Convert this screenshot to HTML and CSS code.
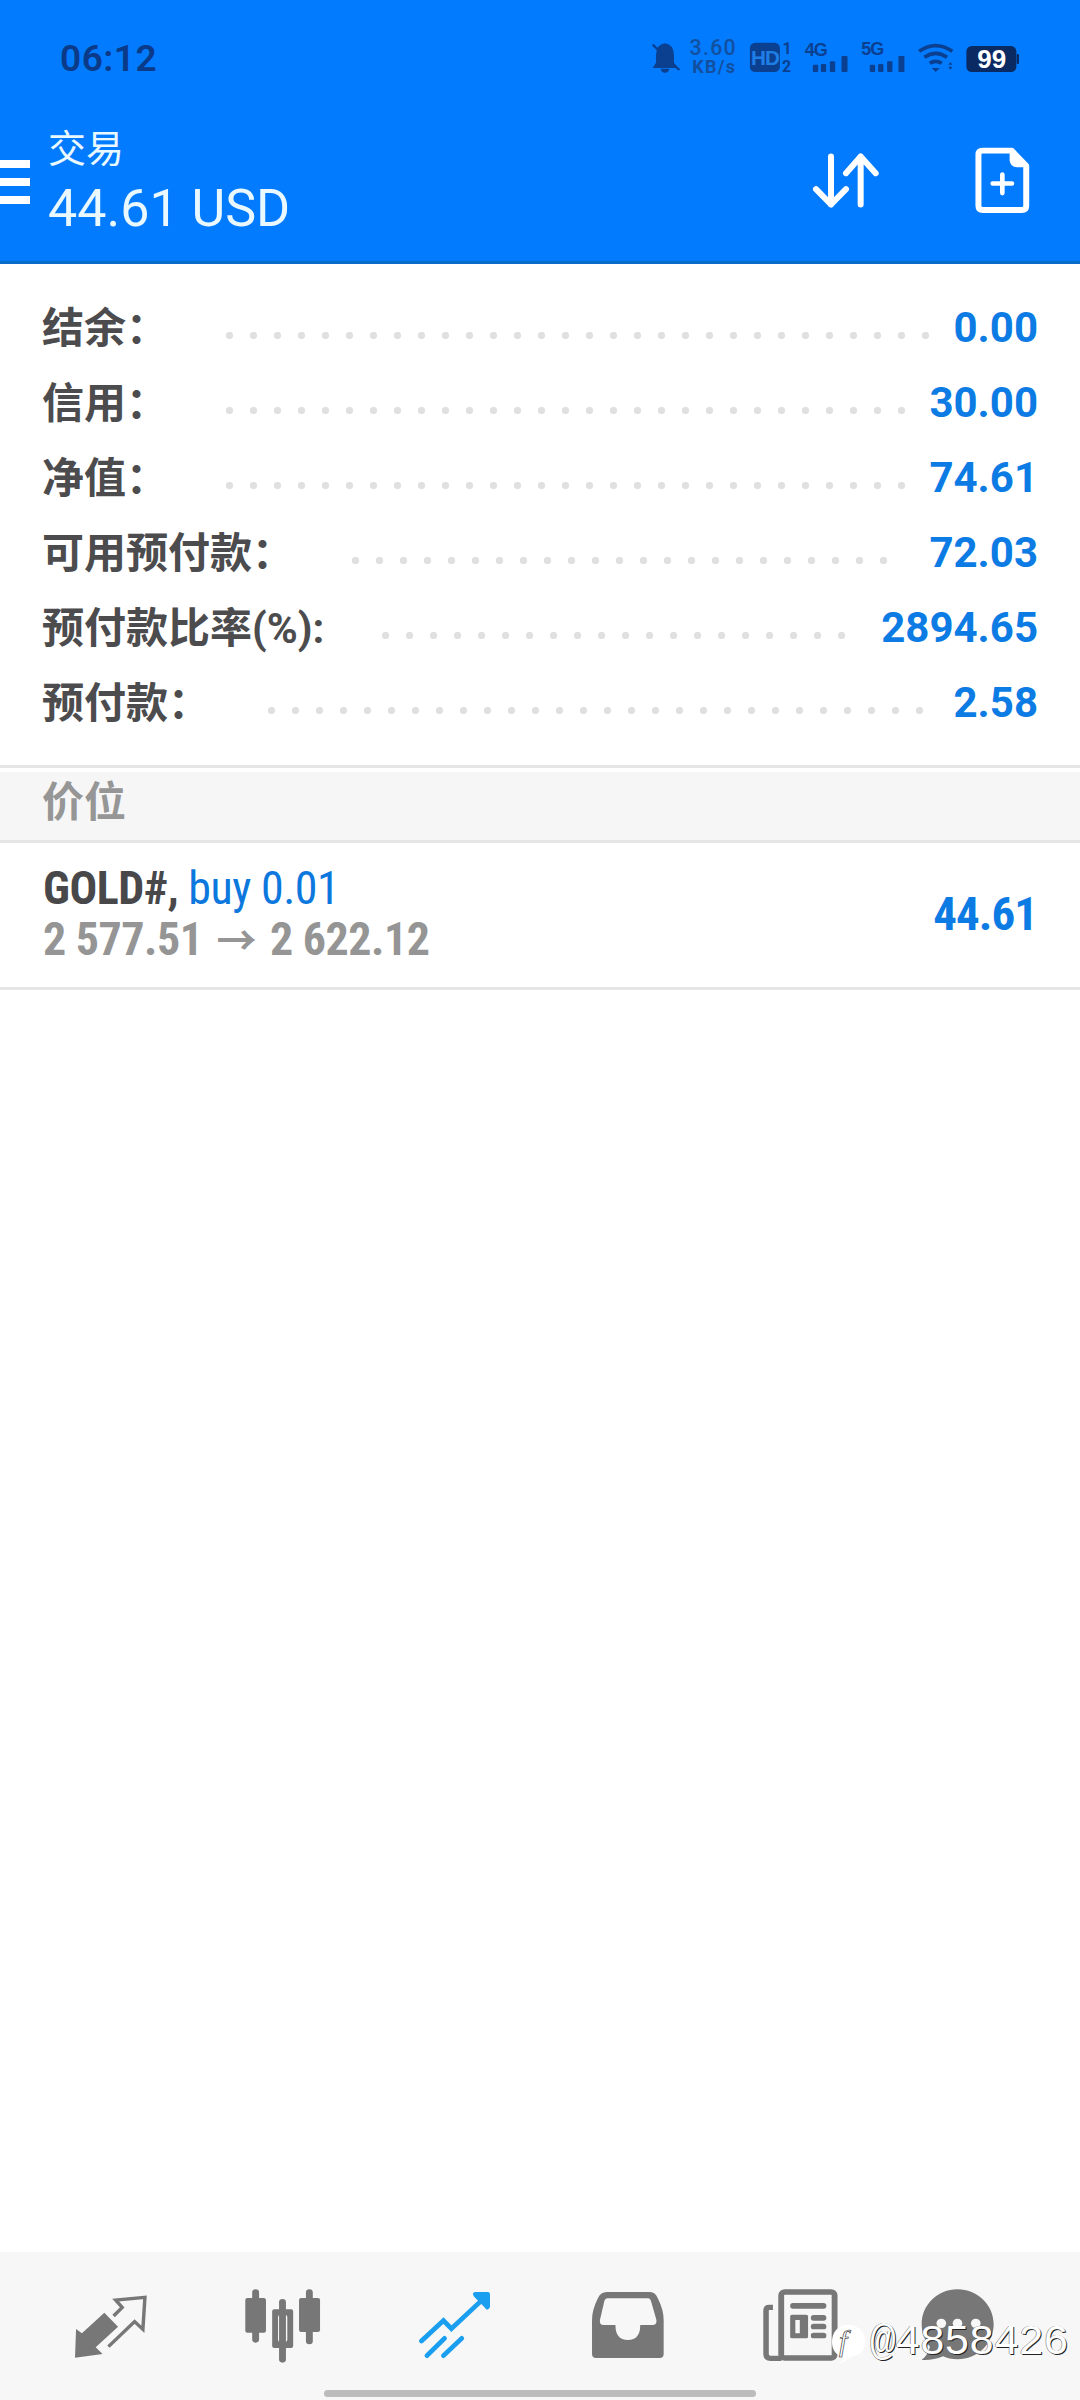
FILE: index.html
```html
<!DOCTYPE html>
<html>
<head>
  <meta charset="utf-8">
  <title>交易</title>
  <link rel="stylesheet" href="styles.css">
</head>
<body>
  <div class="page">
    <div class="header">
      <div class="status-bar">
        <span class="clock">06:12</span>
        <svg class="status-icons" viewBox="150 35 1120 160">
          <!-- bell off -->
          <path class="ic-dark" d="M195 72 Q222 76 222 108 V130 L234 146 H158 L168 130 V108 Q168 76 195 72 Z M182 148 H208 Q206 160 195 160 Q184 160 182 148 Z"/>
          <path class="ic-slash" d="M158 76 L238 152"/>
          <text class="st-speed" x="340" y="108" text-anchor="middle">3.60</text>
          <text class="st-unit" x="343" y="162" text-anchor="middle">KB/s</text>
          <!-- hd -->
          <rect class="ic-dark" x="450" y="70" width="90" height="88" rx="16"/>
          <text class="st-hd" x="495" y="136" text-anchor="middle">HD</text>
          <text class="st-small" x="562" y="104" text-anchor="middle">1</text>
          <text class="st-small" x="560" y="157" text-anchor="middle">2</text>
          <!-- sim 1 -->
          <text class="st-net" x="648" y="110" text-anchor="middle">4G</text>
          <rect class="ic-dark" x="639" y="136" width="16" height="22" rx="3"/>
          <rect class="ic-dark" x="663" y="134" width="16" height="24" rx="3"/>
          <rect class="ic-dark" x="690" y="126" width="16" height="32" rx="3"/>
          <rect class="ic-dark" x="725" y="110" width="18" height="48" rx="3"/>
          <!-- sim 2 -->
          <text class="st-net" x="817" y="108" text-anchor="middle">5G</text>
          <rect class="ic-dark" x="810" y="136" width="16" height="22" rx="3"/>
          <rect class="ic-dark" x="835" y="134" width="16" height="24" rx="3"/>
          <rect class="ic-dark" x="862" y="126" width="16" height="32" rx="3"/>
          <rect class="ic-dark" x="896" y="110" width="18" height="48" rx="3"/>
          <!-- wifi -->
          <path class="ic-wifi" d="M958 96 Q1008 62 1058 96"/>
          <path class="ic-wifi" d="M974 114 Q1008 90 1042 114"/>
          <path class="ic-wifi" d="M990 132 Q1008 120 1026 132"/>
          <path class="ic-dark" d="M996 146 H1020 L1008 158 Z M1046 136 L1052 128 L1058 136 Z M1046 142 H1058 L1052 152 Z"/>
          <!-- battery -->
          <rect class="ic-batt" x="1100" y="80" width="150" height="78" rx="16"/>
          <rect class="ic-batt" x="1251" y="104" width="7" height="30" rx="3"/>
          <text class="st-batt" x="1176" y="147" text-anchor="middle">99</text>
        </svg>
      </div>
      <div class="toolbar">
        <div class="menu-btn"><span></span><span></span><span></span></div>
        <div class="toolbar-title">
          <div class="title-sub">交易</div>
          <div class="title-main">44.61 USD</div>
        </div>
        <svg class="act-swap" viewBox="630 395 210 170">
          <path class="ic-white" d="M693 408 V552 M648 506 L693 552 L738 506"/>
          <path class="ic-white" d="M782 552 V408 M738 458 L782 408 L827 458"/>
        </svg>
        <svg class="act-new" viewBox="1115 370 183 220">
          <path class="ic-doc" d="M1146 390 H1234 L1278 436 V556 Q1278 569 1265 569 H1147 Q1134 569 1134 556 V402 Q1134 390 1146 390 Z"/>
          <path class="ic-fill" d="M1228 384 L1284 440 H1250 Q1230 440 1228 420 Z"/>
          <path class="ic-plus" d="M1206 462 V518 M1177 489 H1235"/>
        </svg>
      </div>
    </div>

    <div class="summary">
      <div class="row"><span class="row-label">结余：</span><span class="row-dots"></span><span class="row-value">0.00</span></div>
      <div class="row"><span class="row-label">信用：</span><span class="row-dots"></span><span class="row-value">30.00</span></div>
      <div class="row"><span class="row-label">净值：</span><span class="row-dots"></span><span class="row-value">74.61</span></div>
      <div class="row"><span class="row-label">可用预付款：</span><span class="row-dots short"></span><span class="row-value">72.03</span></div>
      <div class="row"><span class="row-label">预付款比率(%):</span><span class="row-dots"></span><span class="row-value">2894.65</span></div>
      <div class="row"><span class="row-label">预付款：</span><span class="row-dots"></span><span class="row-value">2.58</span></div>
    </div>

    <div class="section-head">价位</div>

    <div class="position">
      <div class="pos-info">
        <div class="pos-line"><b class="pos-symbol">GOLD#,</b> <span class="pos-side">buy 0.01</span></div>
        <div class="pos-line pos-prices">2 577.51<span class="pos-arrow">→</span>2 622.12</div>
      </div>
      <div class="pos-profit">44.61</div>
    </div>

    <div class="spacer"></div>

    <div class="tabbar">
      <svg class="tab-icon" viewBox="183 153 270 270" preserveAspectRatio="none">
        <path class="ic-gray" d="M215 383 L218 297 L235 310 L300 248 L340 290 L275 352 L295 372 Z"/>
        <path class="ic-line" d="M327 258 L352 232 L333 210 L418 202 L412 298 L388 275 L312 350"/>
      </svg>
      <svg class="tab-icon" viewBox="682 153 270 270" preserveAspectRatio="none">
        <rect class="ic-gray" x="729" y="178" width="20" height="160" rx="10"/>
        <rect class="ic-gray" x="709" y="204" width="60" height="104" rx="6"/>
        <rect class="ic-gray" x="807" y="207" width="20" height="191" rx="10"/>
        <path class="ic-gray" fill-rule="evenodd" d="M793 238 H842 Q848 238 848 244 V348 Q848 354 842 354 H793 Q787 354 787 348 V244 Q787 238 793 238 Z M810 255 Q804 255 804 261 V329 Q804 335 810 335 H825 Q831 335 831 329 V261 Q831 255 825 255 Z"/>
        <rect class="ic-gray" x="885" y="178" width="20" height="165" rx="10"/>
        <rect class="ic-gray" x="865" y="204" width="61" height="102" rx="6"/>
      </svg>
      <svg class="tab-icon" viewBox="1182 153 270 270" preserveAspectRatio="none">
        <path class="ic-active" d="M1221 333 L1285 272 L1308 296 L1395 212"/>
        <path class="ic-active" d="M1237 377 L1288 325 M1285 377 L1338 325"/>
        <path class="ic-active-fill" d="M1376 186 H1414 Q1420 186 1420 192 V232 Q1412 246 1404 232 L1374 200 Q1366 190 1376 186 Z"/>
      </svg>
      <svg class="tab-icon" viewBox="115 153 270 270" preserveAspectRatio="none">
        <path class="ic-gray" fill-rule="evenodd" d="M190 186 H316 Q330 186 338 205 Q355 240 355 270 V372 Q355 384 343 384 H159 Q147 384 147 372 V270 Q147 240 164 205 Q172 186 190 186 Z M192 205 Q186 205 183 212 L170 270 Q168 285 180 285 H215 Q215 330 251 330 Q287 330 287 285 H322 Q336 285 334 270 L318 212 Q315 205 310 205 Z"/>
      </svg>
      <svg class="tab-icon" viewBox="620 153 270 270" preserveAspectRatio="none">
        <rect class="ic-paper" x="699" y="186" width="155" height="198" rx="10"/>
        <path class="ic-fold" d="M675 232 H664 Q655 232 655 241 V372 Q655 385 668 385 H700"/>
        <rect class="ic-gray" x="725" y="219" width="105" height="17" rx="8"/>
        <path class="ic-gray" fill-rule="evenodd" d="M730 254 H772 Q777 254 777 259 V320 Q777 325 772 325 H730 Q725 325 725 320 V259 Q725 254 730 254 Z M740 270 V310 H753 V270 Z"/>
        <rect class="ic-gray" x="785" y="255" width="45" height="17" rx="8"/>
        <rect class="ic-gray" x="785" y="281" width="45" height="17" rx="8"/>
        <rect class="ic-gray" x="785" y="308" width="45" height="17" rx="8"/>
      </svg>
      <svg class="tab-icon" viewBox="1077 153 270 270" preserveAspectRatio="none">
        <path class="ic-gray" d="M1212 178 C1270 178 1317 225 1317 283 C1317 340 1270 388 1212 388 C1196 388 1182 385 1170 379 Q1140 392 1108 390 Q1128 372 1132 350 C1116 332 1108 308 1108 283 C1108 225 1154 178 1212 178 Z"/>
        <circle class="ic-hole" cx="1165" cy="280" r="14"/>
        <circle class="ic-hole" cx="1212" cy="280" r="14"/>
        <circle class="ic-hole" cx="1265" cy="280" r="14"/>
      </svg>
    </div>
  </div>

  <div class="home-indicator"></div>

  <div class="watermark">
    <svg class="wm-logo" viewBox="0 0 36 40">
      <path class="wm-bubble" d="M17 1 C28 1 34 8 34 18 C34 28 28 31 20 33 Q14 37 9 40 Q12 36 12 33 C5 31 1 26 1 18 C1 8 7 1 17 1 Z"/>
      <text class="wm-f" x="8" y="27">f</text>
    </svg>
    <span class="wm-text">@4858426</span>
  </div>
</body>
</html>
```

FILE: styles.css
```css
* {
  box-sizing: border-box;
}

body {
  margin: 0;
  background: #fff;
  font-family: Roboto, "Noto Sans CJK SC", sans-serif;
}

.page {
  width: 1080px;
  height: 2400px;
  display: flex;
  flex-direction: column;
}

/* header */
.header {
  background: #037bff;
  border-bottom: 3px solid #0a6cc6;
  height: 264px;
}

.status-bar {
  height: 100px;
  padding: 16px 57px 0 60px;
  display: flex;
  align-items: center;
  justify-content: space-between;
}

.clock {
  font-size: 37px;
  font-weight: 600;
  color: #0a3a88;
  letter-spacing: 0.5px;
}

.status-icons {
  width: 373px;
  height: 53.3px;
}

.st-speed {
  font: 500 64px Roboto, sans-serif;
  fill: #12509f;
  letter-spacing: 4px;
}

.st-unit {
  font: 700 54px Roboto, sans-serif;
  fill: #12509f;
  letter-spacing: 4px;
}

.st-hd {
  font: 900 62px "Liberation Sans", sans-serif;
  fill: #1f7fe6;
  letter-spacing: -3px;
}

.st-small {
  font: 700 48px Roboto, sans-serif;
  fill: #0b3f8f;
}

.st-net {
  font: 900 54px "Liberation Sans", sans-serif;
  fill: #0b3f8f;
  letter-spacing: -3px;
}

.st-batt {
  font: 900 78px "Liberation Sans", sans-serif;
  fill: #fff;
}

.ic-dark {
  fill: #0b3f8f;
}

.ic-slash {
  fill: none;
  stroke: #0b3f8f;
  stroke-width: 7;
}

.ic-wifi {
  fill: none;
  stroke: #0b3f8f;
  stroke-width: 11;
}

.ic-batt {
  fill: #0a2a63;
}

.toolbar {
  height: 161px;
  display: flex;
  align-items: center;
  padding-right: 47px;
}

.menu-btn {
  width: 30px;
  margin: 2px 18px 0 0;
  display: flex;
  flex-direction: column;
  gap: 10px;
}

.menu-btn span {
  display: block;
  height: 8px;
  background: #fff;
}

.toolbar-title {
  flex: 1;
  color: #e9f9ff;
  margin-top: -4px;
}

.title-sub {
  font-size: 38px;
  line-height: 60px;
}

.title-main {
  font-size: 52px;
  line-height: 60px;
}

.act-swap {
  width: 70px;
  height: 57px;
  margin-right: 92px;
}

.act-new {
  width: 61px;
  height: 73px;
}

.ic-white {
  fill: none;
  stroke: #fff;
  stroke-width: 18;
  stroke-linecap: round;
  stroke-linejoin: round;
}

.ic-doc {
  fill: none;
  stroke: #fff;
  stroke-width: 18;
  stroke-linejoin: round;
}

.ic-fill {
  fill: #fff;
}

.ic-plus {
  fill: none;
  stroke: #fff;
  stroke-width: 14;
  stroke-linecap: round;
}

/* account summary */
.summary {
  padding: 26px 42px 25px;
  border-bottom: 3px solid #e6e6e6;
}

.row {
  height: 75px;
  display: flex;
  align-items: center;
}

.row-label {
  font-size: 42px;
  font-weight: 700;
  color: #4c4c4e;
  white-space: nowrap;
  margin-top: -7px;
}

.row-dots {
  flex: 1;
  align-self: stretch;
  margin: 0 20px 0 58px;
  background-image: radial-gradient(circle at 3.5px 3.5px, #e0e0e0 3.4px, transparent 4px);
  background-size: 24px 8px;
  background-position: 0 42px;
  background-repeat: repeat-x;
}

.row-dots.short {
  margin-right: 30px;
}

.row-value {
  font-size: 42px;
  font-weight: 700;
  color: #0c7ce4;
}

.section-head {
  margin-top: 4px;
  height: 71px;
  padding: 0 42px;
  background: #f6f6f6;
  border-bottom: 3px solid #e6e6e6;
  font-size: 42px;
  font-weight: 700;
  line-height: 62px;
  color: #969696;
}

/* open position */
.position {
  height: 147px;
  padding: 0 43px;
  display: flex;
  align-items: center;
  justify-content: space-between;
  border-bottom: 3px solid #e6e6e6;
}

.pos-info {
  margin-top: 0;
}

.pos-line {
  font-size: 46px;
  line-height: 51px;
  font-stretch: 75%;
  letter-spacing: -0.5px;
  white-space: nowrap;
}

.pos-symbol {
  color: #48484a;
}

.pos-side {
  color: #0c78de;
}

.pos-prices {
  font-weight: 700;
  color: #959595;
}

.pos-arrow {
  margin: 0 14px;
  font-size: 40px;
}

.pos-profit {
  font-size: 47px;
  font-weight: 700;
  font-stretch: 75%;
  letter-spacing: -1px;
  color: #0c7ce4;
  margin-top: -3px;
}

.spacer {
  flex: 1;
}

/* bottom tabs */
.tabbar {
  height: 148px;
  background: #f7f7f7;
  padding-top: 29px;
  display: grid;
  grid-template-columns: 220px 124px 220px 126px 220px 94px;
  justify-items: center;
  align-items: start;
}

.tab-icon {
  width: 93px;
  height: 90px;
}

.ic-gray {
  fill: #777;
}

.ic-line {
  fill: none;
  stroke: #777;
  stroke-width: 10;
}

.ic-paper {
  fill: none;
  stroke: #777;
  stroke-width: 17;
}

.ic-fold {
  fill: none;
  stroke: #777;
  stroke-width: 16;
}

.ic-hole {
  fill: #f7f7f7;
}

.ic-active {
  fill: none;
  stroke: #1a9ff0;
  stroke-width: 14;
  stroke-linecap: round;
  stroke-linejoin: miter;
}

.ic-active-fill {
  fill: #1a9ff0;
}

.home-indicator {
  position: absolute;
  left: 324px;
  top: 2390px;
  width: 432px;
  height: 7px;
  border-radius: 4px;
  background: #bcbcbc;
}

/* watermark over the tab bar */
.watermark {
  position: absolute;
  left: 831px;
  top: 2324px;
  display: flex;
  align-items: flex-start;
}

.wm-logo {
  width: 36px;
  height: 40px;
}

.wm-bubble {
  fill: #fff;
}

.wm-f {
  font: italic 30px "Liberation Serif", serif;
  fill: #fff;
  stroke: #222;
  stroke-width: 0.6;
}

.wm-text {
  margin-left: 3px;
  font-family: "Liberation Mono", monospace;
  font-size: 43px;
  line-height: 38px;
  letter-spacing: -1.1px;
  color: #fff;
  text-shadow: 1px 1px 0 #222, -0.5px -0.5px 0 #666;
}
```
